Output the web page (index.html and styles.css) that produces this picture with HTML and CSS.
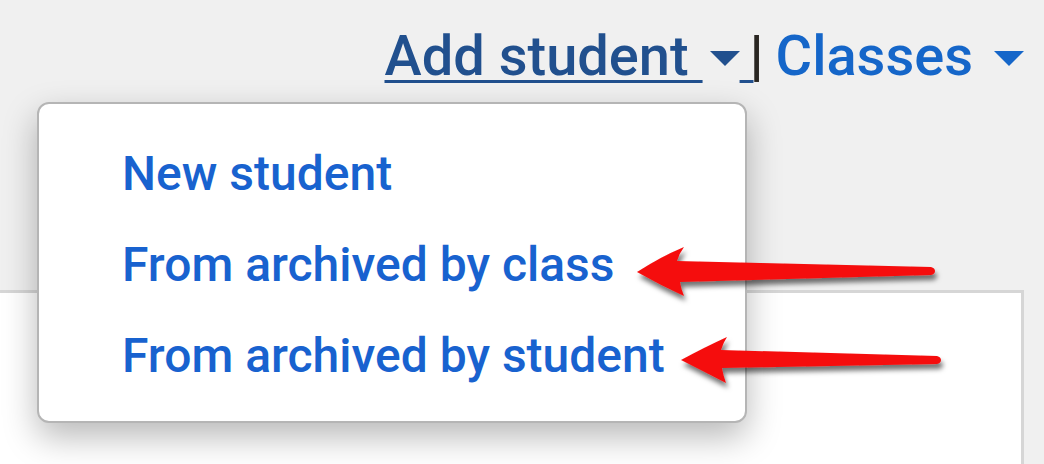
FILE: index.html
```html
<!DOCTYPE html>
<html lang="en">
<head>
<meta charset="utf-8">
<title>Add student menu</title>
<link rel="stylesheet" href="styles.css">
</head>
<body>
<div class="page">
  <nav class="topbar">
    <a class="trigger current" href="#">Add student <span class="caret"></span> </a><span class="sep">|</span><a class="trigger" href="#">Classes <span class="caret"></span></a>
  </nav>
  <div class="panel"></div>

  <ul class="dropdown">
    <li><a href="#">New student</a></li>
    <li><a href="#">From archived by class</a></li>
    <li><a href="#">From archived by student</a></li>
  </ul>

  <svg class="annotations" viewBox="0 0 1044 464" width="1044" height="464" aria-hidden="true">
    <defs>
      <filter id="shadow" x="-10%" y="-50%" width="120%" height="200%">
        <feDropShadow dx="2" dy="5" stdDeviation="2.5" flood-color="#000" flood-opacity="0.55"/>
      </filter>
    </defs>
    <path class="arrow" d="M637 272 Q662 256 684 247 Q679 254 677 261 L931 267 Q935 268 935 271 Q935 274 931 275 L680 282 Q681 289 684 296 Q660 285 637 272 Z"/>
    <path class="arrow" d="M681 360 Q705 347 727 337 Q723 343 721 350 L937 356 Q941 357 941 360 Q941 363 937 364 L722 368 Q723 375 726 383 Q703 371 681 360 Z"/>
  </svg>
</div>
</body>
</html>
```

FILE: styles.css
```css
html, body {
  margin: 0;
  padding: 0;
}

body {
  background: #f0f0f0;
  font-family: Roboto, "Liberation Sans", Arial, sans-serif;
  width: 1044px;
  height: 464px;
  overflow: hidden;
}

.page {
  position: relative;
  width: 1044px;
  height: 464px;
  overflow: hidden;
}

.topbar {
  display: flex;
  justify-content: flex-end;
  align-items: baseline;
  padding: 28px 20px 0 0;
  height: 72px;
  font-size: 56px;
  line-height: 56px;
  font-weight: 500;
}

.trigger {
  color: #1566c9;
  text-decoration: none;
  white-space: pre;
}

.trigger.current {
  color: #21508e;
  text-decoration: underline;
  text-decoration-thickness: 3px;
  text-underline-offset: 5px;
}

.caret {
  display: inline-block;
  width: 0;
  height: 0;
  margin-left: 7px;
  border-left: 15.5px solid transparent;
  border-right: 15.5px solid transparent;
  border-top: 15px solid currentColor;
  vertical-align: 9px;
}

.sep {
  color: #2a2622;
  font-weight: 700;
  margin: 0 12px 0 -4px;
}

.panel {
  margin: 190px 20px 0 -10px;
  height: 200px;
  background: #ffffff;
  border-top: 3px solid #d6d6d6;
  border-right: 3px solid #d6d6d6;
}

.dropdown {
  position: absolute;
  top: 102px;
  left: 37px;
  width: 706px;
  height: 317px;
  box-sizing: content-box;
  margin: 0;
  padding: 0;
  list-style: none;
  background: #ffffff;
  border: 2px solid #b5b5b5;
  border-radius: 12px;
  box-shadow: 0 14px 34px rgba(0, 0, 0, 0.28);
}

.dropdown li {
  font-size: 48px;
  line-height: 91px;
  font-weight: 500;
  padding-left: 83px;
}

.dropdown li:first-child {
  margin-top: 24px;
}

.dropdown a {
  color: #1862cf;
  text-decoration: none;
}

.annotations {
  position: absolute;
  top: 0;
  left: 0;
  pointer-events: none;
}

.arrow {
  fill: #f50f0f;
  filter: url(#shadow);
}
```
